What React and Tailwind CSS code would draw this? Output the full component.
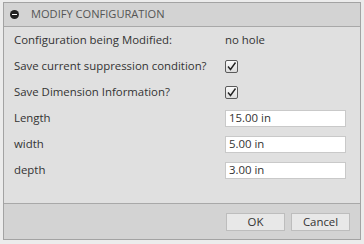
import React from "react";

function Check() {
  return (
    <div className="w-[13px] h-[13px] rounded-[2px] border border-[#5a5a5a] bg-gradient-to-b from-[#fafafa] to-[#dcdcdc] flex items-center justify-center">
      <svg width="11" height="11" viewBox="0 0 11 11">
        <path d="M2 5.5 L4.5 8.5 L9.5 1.5" fill="none" stroke="#222" strokeWidth="1.4" />
      </svg>
    </div>
  );
}

function Field({ value }) {
  return (
    <div className="w-[121px] h-[17px] bg-white border border-[#c9c9c9] flex items-center pl-[3px] text-[#333]">
      {value}
    </div>
  );
}

function Row({ label, children }) {
  return (
    <div className="h-[26px] flex items-center">
      <div className="w-[211px]">{label}</div>
      <div>{children}</div>
    </div>
  );
}

export default function App() {
  return (
    <div
      className="w-[364px] h-[244px] bg-[#ececec] pt-[2px] pl-[3px] text-[11.4px] text-[#333]"
      style={{ fontFamily: '"Open Sans", "Liberation Sans", sans-serif' }}
    >
      <div className="w-[358px] h-[238px] border border-[#a3a3a3] bg-[#e0e0e0] flex flex-col">
        <div className="h-[24px] bg-[#d3d3d3] border-b border-[#a8a8a8] flex items-center pl-[6px] gap-[12px] text-[#555] text-[11.1px]">
          <div className="w-[9px] h-[9px] rounded-full bg-[#222] flex items-center justify-center">
            <div className="w-[5px] h-[1.5px] bg-white" />
          </div>
          <span>MODIFY CONFIGURATION</span>
        </div>
        <div className="flex-1 pl-[10px]">
          <Row label="Configuration being Modified:">
            <span>no hole</span>
          </Row>
          <Row label="Save current suppression condition?">
            <Check />
          </Row>
          <Row label="Save Dimension Information?">
            <Check />
          </Row>
          <Row label="Length">
            <Field value="15.00 in" />
          </Row>
          <Row label="width">
            <Field value="5.00 in" />
          </Row>
          <Row label="depth">
            <Field value="3.00 in" />
          </Row>
        </div>
        <div className="h-[36px] bg-[#d3d3d3] border-t border-[#a8a8a8] flex items-center justify-end pr-[10px] gap-[6px]">
          <div className="w-[59px] h-[18px] bg-[#e8e8e8] border border-[#bdbdbd] flex items-center justify-center">OK</div>
          <div className="w-[59px] h-[18px] bg-[#e8e8e8] border border-[#bdbdbd] flex items-center justify-center">Cancel</div>
        </div>
      </div>
    </div>
  );
}
